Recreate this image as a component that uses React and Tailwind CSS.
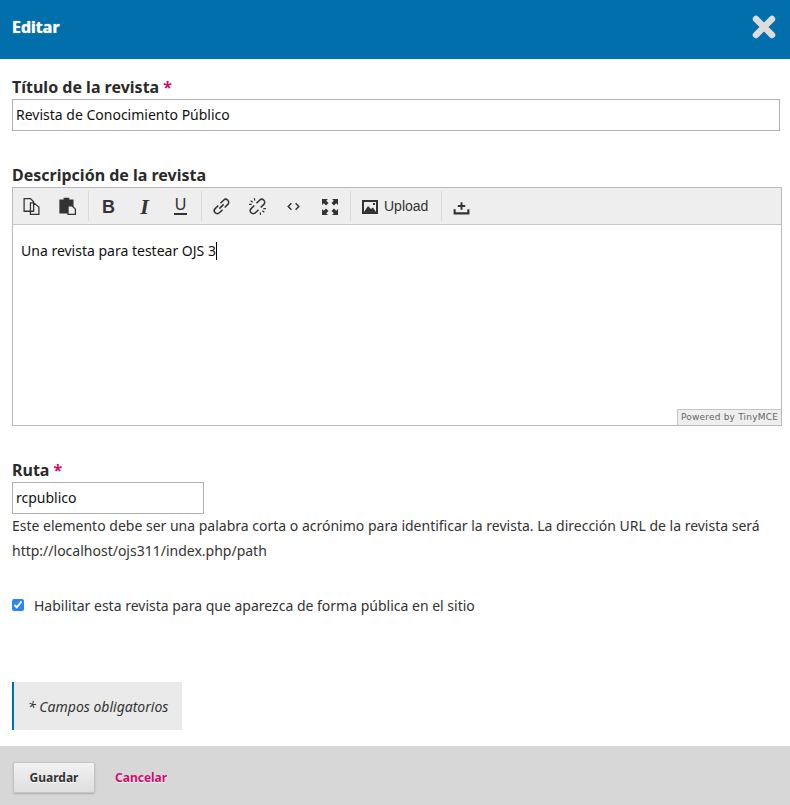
const noto = "font-['Noto_Sans','Open_Sans',sans-serif]";

function ToolBtn({ children }) {
  return <div className="w-[36px] h-[36px] flex items-center justify-center pt-[1px] pr-[1px] text-[#333]">{children}</div>;
}

function Sep() {
  return <div className="w-px h-[30px] bg-[#d9d9d9] mx-[2px]" />;
}

function Icon({ children }) {
  return (
    <svg width="19" height="19" viewBox="0 0 18 18" fill="none" stroke="currentColor" strokeWidth="1.4">
      {children}
    </svg>
  );
}

function Required() {
  return <span className="text-[#d00a6c]"> *</span>;
}

export default function App() {
  return (
    <div className={`w-[790px] h-[805px] bg-white flex flex-col text-[#2a2a2a] ${noto}`}>
      {/* header */}
      <div className="h-[59px] bg-[#006fab] flex items-center justify-between pl-3 pr-[14px] pb-[5px] shrink-0">
        <span className="text-white text-[16px] font-bold [text-shadow:0_0_1px_#fff]">Editar</span>
        <svg width="24" height="24" viewBox="0 0 24 24">
          <path d="M4 4 L20 20 M20 4 L4 20" stroke="#dcdcdc" strokeWidth="6.5" strokeLinecap="round" />
        </svg>
      </div>

      {/* form */}
      <div className="flex-1 px-3 flex flex-col items-start">
        <label className="mt-[17px] h-[23px] leading-[23px] text-[16px] font-bold">Título de la revista<Required /></label>
        <div className="w-[768px] h-[32px] border border-[#b0b0b0] px-[3px] leading-[30px] text-[14px] text-[#111]">Revista de Conocimiento Público</div>

        <label className="mt-[33px] h-[23px] leading-[23px] text-[16px] font-bold">Descripción de la revista</label>
        <div className="relative w-[770px] h-[239px] border border-[#b9b9b9]">
          <div className="h-[36px] bg-[#eeeeee] border-b border-[#c5c5c5] flex items-center pl-[1px] box-content">
            <ToolBtn>
              <Icon>
                <path d="M2 1.500h6l3 3v9H2z M8 5.500h3l5 4v7H8z" strokeWidth="1.200" />
              </Icon>
            </ToolBtn>
            <ToolBtn>
              <Icon>
                <path d="M2 3h12v5H9v7H2z" fill="currentColor" />
                <path d="M6 1.500h4v2H6z" fill="currentColor" />
                <path d="M9.500 8.500h4l3 3v5h-7z" fill="#eee" strokeWidth="1.200" />
              </Icon>
            </ToolBtn>
            <Sep />
            <ToolBtn>
              <span className="font-['Liberation_Sans',sans-serif] font-bold text-[18px] leading-none">B</span>
            </ToolBtn>
            <ToolBtn>
              <span className="font-['Liberation_Serif',serif] italic font-bold text-[22px] leading-none">I</span>
            </ToolBtn>
            <ToolBtn>
              <span className="flex flex-col items-center">
                <span className="font-['Liberation_Sans',sans-serif] text-[16px] leading-[14px]">U</span>
                <span className="w-[13px] h-[2px] bg-[#333] mt-[1px]" />
              </span>
            </ToolBtn>
            <Sep />
            <ToolBtn>
              <Icon>
                <path d="M7 11l4-4M6 8l-3 3a2.800 2.800 0 0 0 4 4l3-3M8 6l3-3a2.800 2.800 0 0 1 4 4l-3 3" />
              </Icon>
            </ToolBtn>
            <ToolBtn>
              <Icon>
                <path d="M6 8l-3 3a2.800 2.800 0 0 0 4 4l3-3M8 6l3-3a2.800 2.800 0 0 1 4 4l-3 3" />
                <path d="M2.500 3.500l2 1.500M6 1l.5 2.500M1 7h2.500M12 17l-.5-2.500M17 11h-2.500M15.500 14.500l-2-1.500" strokeWidth="1.100" />
              </Icon>
            </ToolBtn>
            <ToolBtn>
              <Icon>
                <path d="M7 6L4 9l3 3M11 6l3 3-3 3" />
              </Icon>
            </ToolBtn>
            <ToolBtn>
              <svg width="18" height="18" viewBox="0 0 18 18" fill="currentColor">
                <path d="M1 1h6L5.200 2.800 7.500 5 5 7.500 2.800 5.200 1 7z M17 1v6l-1.800-1.800L13 7.500 10.500 5l2.300-2.200L11 1z M1 17v-6l1.800 1.800L5 10.500 7.500 13l-2.300 2.200L7 17z M17 17h-6l1.800-1.800L10.500 13l2.500-2.500 2.200 2.300L17 11z" />
              </svg>
            </ToolBtn>
            <Sep />
            <div className="h-[36px] w-[86px] flex items-center gap-[6px] pl-[9px] pt-[1px]">
              <svg width="16" height="14" viewBox="0 0 16 14">
                <path d="M0 0h16v14H0z M2 2v10h12V2z" fill="#333" fillRule="evenodd" />
                <path d="M2 12l4-6 3 3 2-1.500 3 4.500z M11 3h2v2h-2z" fill="#333" />
              </svg>
              <span className="font-['Liberation_Sans',sans-serif] text-[14px] text-[#333]">Upload</span>
            </div>
            <Sep />
            <ToolBtn>
              <Icon>
                <path d="M2.500 11.500v4h13v-4" strokeWidth="2" fill="none" />
                <path d="M9 5v7M5.500 8.500h7" strokeWidth="1.800" />
              </Icon>
            </ToolBtn>
          </div>
          <div className="pl-2 pt-[15px] text-[14px] leading-[22px] text-[#111] flex items-center">
            Una revista para testear OJS 3<span className="inline-block w-px h-[18px] bg-black" />
          </div>
          <div className="absolute right-0 bottom-0 h-[16px] w-[104px] bg-[#eeeeee] border-t border-l border-[#c5c5c5] text-[9px] leading-[15px] text-center tracking-[0.2px] whitespace-nowrap text-[#666] font-['DejaVu_Sans',sans-serif]">
            Powered by TinyMCE
          </div>
        </div>

        <label className="mt-[33px] h-[23px] leading-[23px] text-[16px] font-bold">Ruta<Required /></label>
        <div className="w-[192px] h-[32px] border border-[#b0b0b0] px-[3px] leading-[30px] text-[14px] text-[#111]">rcpublico</div>
        <p className="w-[770px] -mt-[1px] text-[14px] leading-[25px] text-[#333]">
          Este elemento debe ser una palabra corta o acrónimo para identificar la revista. La dirección URL de la revista será http://localhost/ojs311/index.php/path
        </p>

        <div className="mt-[29px] h-[26px] flex items-center text-[14px] text-[#333]">
          <input type="checkbox" defaultChecked className="w-[12px] h-[12px] m-0 mr-[10px] accent-[#2a85f5]" />
          Habilitar esta revista para que aparezca de forma pública en el sitio
        </div>

        <div className="mt-[64px] w-[170px] h-[48px] bg-[#eaeaea] border-l-2 border-[#006fab] pl-[14px] flex items-center text-[14px] italic text-[#333]">
          * Campos obligatorios
        </div>
      </div>

      {/* footer */}
      <div className="h-[59px] shrink-0 bg-[#d7d7d7] flex items-center pl-[13px] pt-[4px]">
        <button className="w-[82px] h-[31px] rounded-[2px] border border-[#c4c4c4] bg-gradient-to-b from-[#f2f2f2] to-[#dedede] shadow-[0_1px_2px_rgba(0,0,0,0.2)] text-[12px] font-bold text-[#333] [text-shadow:0_1px_0_#fff]">
          Guardar
        </button>
        <span className="ml-[20px] text-[12px] font-bold text-[#d00a6c] [text-shadow:0_1px_0_#fff]">Cancelar</span>
      </div>
    </div>
  );
}
